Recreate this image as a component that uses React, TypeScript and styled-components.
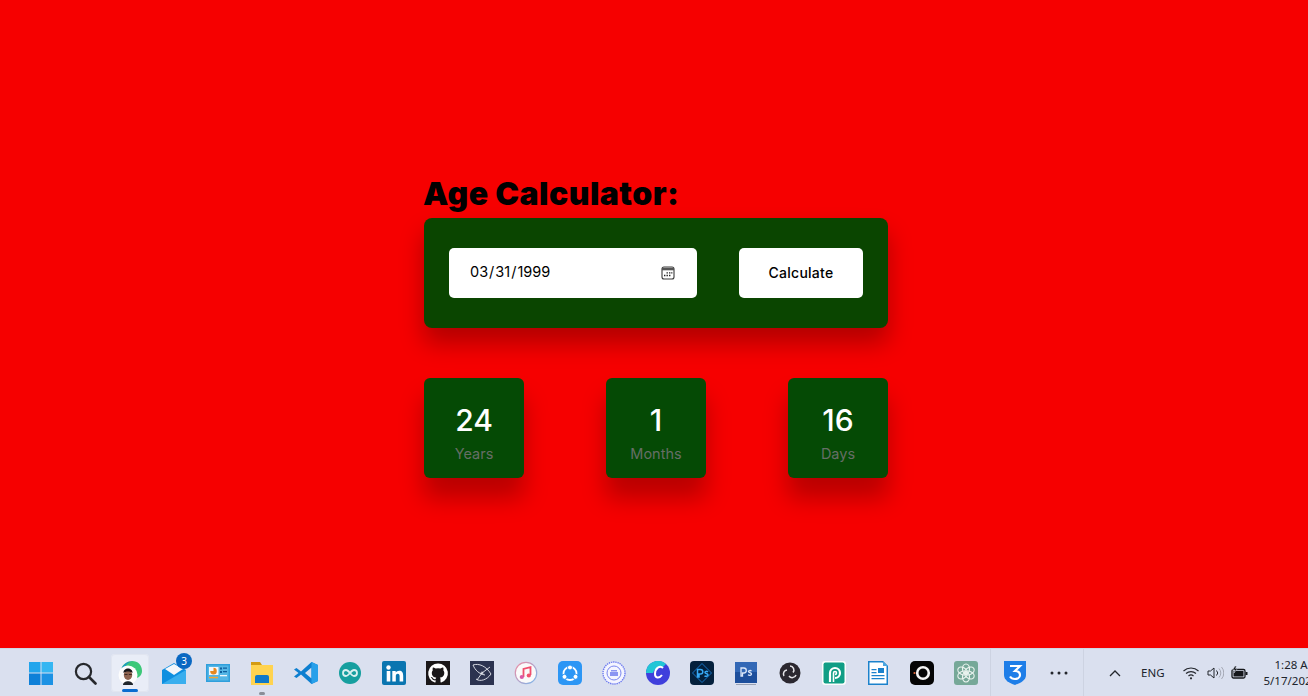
import React from "react";
import styled, { createGlobalStyle } from "styled-components";

const Global = createGlobalStyle`
  html, body { margin: 0; padding: 0; height: 100%; overflow: hidden; }
  body { font-family: "Inter", "Noto Sans", sans-serif; background: #f60000; }
  #root { height: 100%; }
`;

const Page = styled.div`
  height: 696px;
  display: flex;
  flex-direction: column;
  overflow: hidden;
`;

const Main = styled.main`
  flex: 1;
  display: flex;
  flex-direction: column;
  align-items: center;
  padding: 174px 0 0 4px;
`;

const Calculator = styled.section`
  width: 464px;
  display: flex;
  flex-direction: column;
`;

const Title = styled.h1`
  margin: 0 0 0 -1px;
  height: 44px;
  font-size: 32px;
  line-height: 40px;
  font-weight: 900;
  letter-spacing: 0.42px;
  color: #000;
`;

const Panel = styled.div`
  height: 110px;
  box-sizing: border-box;
  padding: 30px 25px;
  display: flex;
  justify-content: space-between;
  background: #0a4500;
  border-radius: 8px;
  box-shadow: 0 15px 25px rgba(0, 0, 0, 0.28);
`;

const DateField = styled.div`
  position: relative;
  width: 248px;
  height: 50px;
`;

const DateInput = styled.input`
  width: 100%;
  height: 100%;
  box-sizing: border-box;
  padding: 0 20px 3px 20px;
  border: 0;
  border-radius: 5px;
  background: #fff;
  color: #000;
  font-family: "Inter", sans-serif;
  font-size: 14.5px;
  outline: none;
  &::-webkit-calendar-picker-indicator {
    opacity: 0;
  }
`;

const CalendarGlyph = styled.svg`
  position: absolute;
  top: 18px;
  right: 22px;
  width: 14px;
  height: 14px;
  pointer-events: none;
`;

const CalcButton = styled.button`
  width: 124px;
  height: 50px;
  padding: 0 0 2px;
  border: 0;
  border-radius: 5px;
  background: #fff;
  color: #000;
  font-family: "Inter", sans-serif;
  font-size: 14px;
  font-weight: 500;
  letter-spacing: 0.25px;
`;

const Results = styled.div`
  margin-top: 50px;
  display: flex;
  justify-content: space-between;
`;

const ResultCard = styled.div`
  width: 100px;
  height: 100px;
  box-sizing: border-box;
  padding-top: 24px;
  display: flex;
  flex-direction: column;
  align-items: center;
  background: #054a05;
  border-radius: 6px;
  box-shadow: 0 20px 25px rgba(0, 0, 0, 0.25);
`;

const Value = styled.div`
  height: 36px;
  font-size: 30px;
  line-height: 36px;
  font-weight: 500;
  color: #fff;
`;

const Unit = styled.div`
  margin-top: 6px;
  font-size: 14.5px;
  line-height: 20px;
  color: #666e66;
`;

const Taskbar = styled.footer`
  height: 48px;
  flex-shrink: 0;
  display: flex;
  align-items: center;
  padding-left: 19px;
  overflow: hidden;
  box-sizing: border-box;
  background: #dae0ef;
  border-top: 1px solid #cfd5e4;
`;

const Slot = styled.div`
  position: relative;
  width: 44px;
  height: 38px;
  flex-shrink: 0;
  display: flex;
  align-items: center;
  justify-content: center;
  &:first-child {
    margin-right: 1px;
  }
`;

const Highlight = styled.span`
  position: absolute;
  top: 0;
  bottom: 0;
  left: 3px;
  right: 3px;
  border-radius: 4px;
  background: #e9edf7;
  box-shadow: inset 0 0 0 1px #e1e5f0;
`;

const Lift = styled.span`
  position: relative;
  display: flex;
`;

const RunDot = styled.span<{ $wide?: boolean }>`
  position: absolute;
  bottom: ${(p) => (p.$wide ? "0" : "-3px")};
  left: 50%;
  width: ${(p) => (p.$wide ? "16px" : "6px")};
  height: 3px;
  margin-left: ${(p) => (p.$wide ? "-8px" : "-3px")};
  border-radius: 2px;
  background: ${(p) => (p.$wide ? "#0a6cd0" : "#8a8e98")};
`;

const MailBadge = styled.span`
  position: absolute;
  top: -1px;
  right: 4px;
  width: 16px;
  height: 16px;
  border-radius: 50%;
  background: #0a68c2;
  color: #fff;
  font-family: "Noto Sans", sans-serif;
  font-size: 10px;
  line-height: 16px;
  text-align: center;
`;

const Divider = styled.div<{ $before: number; $after: number }>`
  width: 1px;
  height: 48px;
  flex-shrink: 0;
  margin: 0 ${(p) => p.$after}px 0 ${(p) => p.$before}px;
  background: #cdd3e2;
`;

const Tray = styled.div`
  display: flex;
  align-items: center;
  flex-shrink: 0;
  margin-left: 25px;
`;

const Lang = styled.span`
  margin: 0 18px 0 20px;
  font-family: "Noto Sans", sans-serif;
  font-size: 11.5px;
  color: #20242c;
`;

const TrayGlyph = styled.svg<{ $gap?: number }>`
  flex-shrink: 0;
  margin-right: ${(p) => p.$gap ?? 0}px;
`;

const Clock = styled.div`
  flex-shrink: 0;
  margin-left: 16px;
  text-align: right;
  font-family: "Noto Sans", sans-serif;
  font-size: 11.5px;
  line-height: 16px;
  color: #20242c;
`;

const I = ({ children }: { children: React.ReactNode }) => (
  <svg width="24" height="24" viewBox="0 0 24 24" aria-hidden="true">
    {children}
  </svg>
);

const icons: { key: string; node: React.ReactNode; active?: boolean; dot?: boolean; badge?: string }[] = [
  { key: "start", node: <I><path d="M0 1h11.500v10.500H0z" fill="#22a5ec"/><path d="M12.500 1H24v10.500H12.500z" fill="#35b6f2"/><path d="M0 12.500h11.500V24H0z" fill="#0e80d8"/><path d="M12.500 12.500H24V24H12.500z" fill="#1c92e4"/></I> },
  { key: "search", node: <I><circle cx="9.500" cy="10.500" r="7.600" fill="none" stroke="#26282c" strokeWidth="2.200"/><path d="M15 16l6.500 6.500" stroke="#26282c" strokeWidth="2.600" strokeLinecap="round"/></I> },
  { key: "edge", active: true, node: <I><path d="M3 9C4 3 10 0 14 0c6 0 10 4 10 10 0 4-3 7-6 7h-3c2-1 3-4 2-6-2-3-9-4-14-2z" fill="#3cc878"/><path d="M3 9c2-6 7-9 12-8.500C10 1 7 4 6 8z" fill="#1a8fd0"/><circle cx="10" cy="14" r="9.500" fill="#fdfdfd"/><path d="M5 24c0-5 10-5 10 0z" fill="#20262c"/><ellipse cx="10" cy="14" rx="4.200" ry="5" fill="#8f6450"/><path d="M5.500 12c-.5-6 9.500-6 9 0-2-2-7-2-9 0z" fill="#17171a"/><path d="M6.500 13.500h3M10.800 13.500h3" stroke="#2a1c18" strokeWidth=".8"/></I> },
  { key: "mail", badge: "3", node: <I><path d="M0 9l12-7 12 7v14H0z" fill="#0e8fe0"/><path d="M3 8l9-5 9 5-9 6z" fill="#f4f6fa"/><path d="M0 23l24-14v14z" fill="#39aeee"/></I> },
  { key: "board", node: <I><path d="M0 3h24v18H0z" fill="#2f9fdc"/><path d="M1.500 4.500h21v15h-21z" fill="#55b6e6"/><path d="M3 6h9.500v8H3z" fill="#f2f7fb"/><path d="M7.500 10V6.800a3.300 3.300 0 1 1-3.300 3.200z" fill="#e8881f"/><path d="M14 6.500h2v2h-2zM14 10h2v2h-2zM17 6.500h4v1.300h-4zM17 10h4v1.300h-4z" fill="#0f5f9e"/><path d="M14 14h7v1.300h-7z" fill="#eef6fb"/><path d="M3 15.800h9v1.500H3z" fill="#f0a83a"/></I> },
  { key: "files", dot: true, node: <I><path d="M1 1h9l2 3H1z" fill="#d49b12"/><path d="M1 4h22v20H1z" fill="#ffd34f"/><path d="M5 16a2 2 0 0 1 2-2h10a2 2 0 0 1 2 2v6H5z" fill="#0f79c9"/></I> },
  { key: "vscode", node: <I><path d="M17.500 1L24 4v16l-6.500 3L7 13.500 2.500 17 0 15.500 4.500 12 0 8.500 2.500 7 7 10.500z" fill="#0e7fd0"/><path d="M17.500 6.500L11 12l6.500 5.500z" fill="#dae0ef"/><path d="M17.500 1L24 4v16l-6.500 3z" fill="#27a0ea"/></I> },
  { key: "arduino", node: <I><circle cx="12" cy="12" r="11" fill="#169f9f"/><path d="M8 9a3 3 0 1 0 0 6c3 0 5-6 8-6a3 3 0 1 1 0 6c-3 0-5-6-8-6z" fill="none" stroke="#d8f0f0" strokeWidth="1.800"/></I> },
  { key: "linkedin", node: <I><rect width="24" height="24" rx="2" fill="#0a75b0"/><circle cx="6.500" cy="6.500" r="2.200" fill="#fff"/><path d="M4.700 10h3.600v10.500H4.700zM10.300 10h3.400v1.500c.8-1.100 2-1.800 3.500-1.800 3 0 4 2 4 5v5.800h-3.600v-5.200c0-1.500-.5-2.500-1.800-2.500-1.500 0-2 1.100-2 2.500v5.200h-3.500z" fill="#fff"/></I> },
  { key: "github", node: <I><rect width="24" height="24" fill="#1a1718"/><path d="M12 2.500a9.800 9.800 0 0 0-3.100 19.100c.5.100.7-.2.7-.5v-1.800c-2.700.6-3.300-1.200-3.300-1.200-.5-1.100-1.100-1.400-1.100-1.400-.9-.6.100-.6.100-.6 1 .1 1.500 1 1.500 1 .9 1.500 2.300 1.100 2.900.8.100-.6.300-1.100.6-1.300-2.200-.2-4.500-1.100-4.500-4.800 0-1.100.4-1.900 1-2.600-.1-.2-.4-1.200.1-2.600 0 0 .8-.3 2.700 1a9.400 9.400 0 0 1 4.900 0c1.900-1.300 2.700-1 2.700-1 .5 1.400.2 2.400.1 2.600.6.700 1 1.500 1 2.600 0 3.700-2.300 4.600-4.500 4.800.4.300.7.900.7 1.800v2.700c0 .3.200.6.700.5A9.800 9.800 0 0 0 12 2.500z" fill="#fff"/></I> },
  { key: "postman", node: <I><rect width="24" height="24" fill="#2c3350"/><g fill="none" stroke="#e8eaf0" strokeWidth="0.900"><path d="M3 4c6-2 13 1 18 9-4 6-11 8-15 5"/><path d="M3 4c2 5 6 9 12 10M12 12l-5 7M12 12l8-6"/><circle cx="12" cy="12" r="1"/></g></I> },
  { key: "itunes", node: <I><defs><linearGradient id="ring" x1="0" y1="0" x2="1" y2="1"><stop offset="0" stopColor="#f08aa0"/><stop offset="1" stopColor="#7ab8ee"/></linearGradient></defs><circle cx="12" cy="12" r="10.700" fill="#fafafa" stroke="url(#ring)" strokeWidth="1.200"/><path d="M9.500 16V8l7-1.800V14" fill="none" stroke="#f0506e" strokeWidth="1.800"/><circle cx="7.800" cy="16" r="2.100" fill="#d85aa8"/><circle cx="14.800" cy="14.500" r="2.100" fill="#f0506e"/></I> },
  { key: "shareit", node: <I><rect width="24" height="24" rx="5" fill="#2c96f5"/><circle cx="12" cy="12.500" r="6.500" fill="none" stroke="#fff" strokeWidth="1.800"/><circle cx="12" cy="6.500" r="2.500" fill="#fff" stroke="#2c96f5"/><circle cx="6.500" cy="15.800" r="2.500" fill="#fff" stroke="#2c96f5"/><circle cx="17.500" cy="15.800" r="2.500" fill="#fff" stroke="#2c96f5"/></I> },
  { key: "seal", node: <I><circle cx="12" cy="12" r="11" fill="#f4f5ff" stroke="#6d7bf0" strokeWidth="1.400" strokeDasharray="1.400 .8"/><circle cx="12" cy="12" r="7" fill="none" stroke="#7a86ef" strokeWidth="1"/><path d="M8 11h8v4H8zM9 9h6v1.500H9z" fill="#8a95f2"/></I> },
  { key: "canva", node: <I><circle cx="12" cy="12" r="12" fill="#3f3fdc"/><path d="M0 12a12 12 0 0 1 20-9l-4 4a7 7 0 0 0-9 5z" fill="#22c6d6"/><path d="M17 7c-3-3-8 0-8 6 0 4 4 5 7 1" fill="none" stroke="#fff" strokeWidth="2"/></I> },
  { key: "psx", node: <I><rect width="24" height="24" rx="4" fill="#04203c"/><path d="M12 2.500L21.500 12 12 21.500 2.500 12z" fill="none" stroke="#1673c4" strokeWidth="1"/><path d="M7.500 16V8.500h3a2.300 2.300 0 0 1 0 4.600h-1.500V16zM18 11c-1-1-3-.8-3 .4 0 1.400 3 .9 3 2.700 0 1.400-2.300 1.600-3.500.7" fill="none" stroke="#37a9f5" strokeWidth="1.500"/></I> },
  { key: "ps", node: <I><path d="M1 1h22v21H1z" fill="#1d4f9c"/><path d="M1 1h22v10H1z" fill="#3268b6"/><path d="M2 23h20v1H2z" fill="#9aa2b4"/><path d="M7 15V7h2.800a2.500 2.500 0 0 1 0 5H8.500v3zM17.500 10c-1-.8-3-.6-3 .6 0 1.300 3 .8 3 2.500 0 1.400-2.300 1.500-3.500.7" fill="none" stroke="#dce8fa" strokeWidth="1.300"/></I> },
  { key: "obs", node: <I><circle cx="12" cy="12" r="10.500" fill="#2b2830"/><g fill="none" stroke="#e4e4e8" strokeWidth="1.500"><path d="M12 5a4 4 0 0 1 3 6.500"/><path d="M18 14a4 4 0 0 1-7 1"/><path d="M6 15a4 4 0 0 1 3-6"/></g></I> },
  { key: "photopea", node: <I><rect width="24" height="24" rx="3" fill="#fbfdfc"/><rect x="1.500" y="1.500" width="21" height="21" rx="2" fill="#109e85"/><path d="M8 21v-9a5 5 0 1 1 5 5" fill="none" stroke="#fff" strokeWidth="2.200"/><path d="M11.500 21v-9a1.500 1.500 0 1 1 1.500 1.500" fill="none" stroke="#fff" strokeWidth="1.600"/></I> },
  { key: "writer", node: <I><path d="M2 0h15l5 5v19H2z" fill="#1b82cc"/><path d="M3.500 1.500h13l4 4v17h-17z" fill="#fff"/><path d="M17 0l5 5h-5z" fill="#4aa5e0"/><path d="M12 7h6v5h-6zM5.500 8h5v1.200h-5zM5.500 11h5v1.200h-5zM5.500 14h13v1.200h-13zM5.500 17h13v1.200h-13z" fill="#1b82cc"/></I> },
  { key: "circle", node: <I><rect width="24" height="24" rx="5" fill="#050505"/><circle cx="13" cy="12" r="5.800" fill="none" stroke="#f4f4f4" strokeWidth="2.600"/><circle cx="4.500" cy="12" r="1.100" fill="#e5683a"/></I> },
  { key: "chatgpt", node: <I><rect width="24" height="24" rx="3" fill="#76a898"/><g fill="none" stroke="#eaf3ef" strokeWidth="1.200"><ellipse cx="12" cy="8" rx="3.500" ry="5"/><ellipse cx="12" cy="8" rx="3.500" ry="5" transform="rotate(60 12 12)"/><ellipse cx="12" cy="8" rx="3.500" ry="5" transform="rotate(120 12 12)"/><ellipse cx="12" cy="8" rx="3.500" ry="5" transform="rotate(180 12 12)"/><ellipse cx="12" cy="8" rx="3.500" ry="5" transform="rotate(240 12 12)"/><ellipse cx="12" cy="8" rx="3.500" ry="5" transform="rotate(300 12 12)"/></g></I> },
];

const Css3 = () => (
  <I>
    <path d="M1 0h22v14c0 5-5 8-11 10C6 22 1 19 1 14z" fill="#1e7ee8" />
    <path d="M7 5h10l-5 5c3 0 5 1.500 5 4 0 3-3 4-5 4-2 0-4-.8-5-2.500" fill="none" stroke="#fff" strokeWidth="2.200" />
  </I>
);

const Dots = () => (
  <I>
    <circle cx="5" cy="12" r="1.500" fill="#23262c" />
    <circle cx="12" cy="12" r="1.500" fill="#23262c" />
    <circle cx="19" cy="12" r="1.500" fill="#23262c" />
  </I>
);

export default function App() {
  return (
    <Page>
      <Global />
      <Main>
        <Calculator>
          <Title>Age Calculator:</Title>
          <Panel>
            <DateField>
              <DateInput type="date" defaultValue="1999-03-31" />
              <CalendarGlyph viewBox="0 0 14 14" aria-hidden="true">
                <rect x="1" y="1" width="12" height="12" rx="2" fill="none" stroke="#3a3a3a" strokeWidth="1.100" />
                <path d="M1 1.800h12V4.300H1z" fill="#555" />
                <path d="M5.500 6.200h1.400v1.400H5.500zM8 6.200h1.400v1.400H8zM10.200 6.200h1.200v1.400h-1.200zM3 8.800h1.400v1.400H3zM5.500 8.800h1.400v1.400H5.500zM8 8.800h1.400v1.400H8z" fill="#222" />
              </CalendarGlyph>
            </DateField>
            <CalcButton>Calculate</CalcButton>
          </Panel>
          <Results>
            <ResultCard>
              <Value>24</Value>
              <Unit>Years</Unit>
            </ResultCard>
            <ResultCard>
              <Value>1</Value>
              <Unit>Months</Unit>
            </ResultCard>
            <ResultCard>
              <Value>16</Value>
              <Unit>Days</Unit>
            </ResultCard>
          </Results>
        </Calculator>
      </Main>
      <Taskbar>
        {icons.map((icon) => (
          <Slot key={icon.key}>
            {icon.active && <Highlight />}
            <Lift>{icon.node}</Lift>
            {icon.badge && <MailBadge>{icon.badge}</MailBadge>}
            {icon.active && <RunDot $wide />}
            {icon.dot && <RunDot />}
          </Slot>
        ))}
        <Divider $before={2} $after={2} />
        <Slot><Css3 /></Slot>
        <Slot><Dots /></Slot>
        <Divider $before={2} $after={0} />
        <Tray>
          <TrayGlyph width="12" height="8" viewBox="0 0 12 8" aria-hidden="true">
            <path d="M1 7l5-5 5 5" fill="none" stroke="#23262c" strokeWidth="1.300" />
          </TrayGlyph>
          <Lang>ENG</Lang>
          <TrayGlyph $gap={8} width="16" height="14" viewBox="0 0 16 14" aria-hidden="true">
            <g fill="none" stroke="#23262c" strokeWidth="1.100">
              <path d="M.5 5a11 11 0 0 1 15 0" />
              <path d="M3 7.500a7.500 7.500 0 0 1 10 0" />
              <path d="M5.500 10a3.800 3.800 0 0 1 5 0" />
            </g>
            <circle cx="8" cy="12.300" r="1.100" fill="#23262c" />
          </TrayGlyph>
          <TrayGlyph $gap={7} width="17" height="14" viewBox="0 0 17 14" aria-hidden="true">
            <path d="M1 5h2.500L7 2v10L3.500 9H1z" fill="none" stroke="#23262c" strokeWidth="1" />
            <path d="M9.500 4.500a3.500 3.500 0 0 1 0 5" fill="none" stroke="#23262c" strokeWidth="1" />
            <path d="M12 2.500a6.500 6.500 0 0 1 0 9M14.500 1a9 9 0 0 1 0 12" fill="none" stroke="#a4a8b4" strokeWidth="1" />
          </TrayGlyph>
          <TrayGlyph width="17" height="14" viewBox="0 0 17 14" aria-hidden="true">
            <rect x="1" y="3.500" width="13" height="8.500" rx="1.500" fill="none" stroke="#15171b" strokeWidth="1.300" />
            <rect x="2.500" y="5" width="10" height="5.500" fill="#15171b" />
            <path d="M14.500 6h2v3h-2z" fill="#15171b" />
            <path d="M4 0L1.500 4H4L3 7l3.500-4.500H4.500L5.500 0z" fill="#15171b" stroke="#dae0ef" strokeWidth=".5" />
          </TrayGlyph>
        </Tray>
        <Clock>
          1:28 AM
          <br />
          5/17/2023
        </Clock>
      </Taskbar>
    </Page>
  );
}
